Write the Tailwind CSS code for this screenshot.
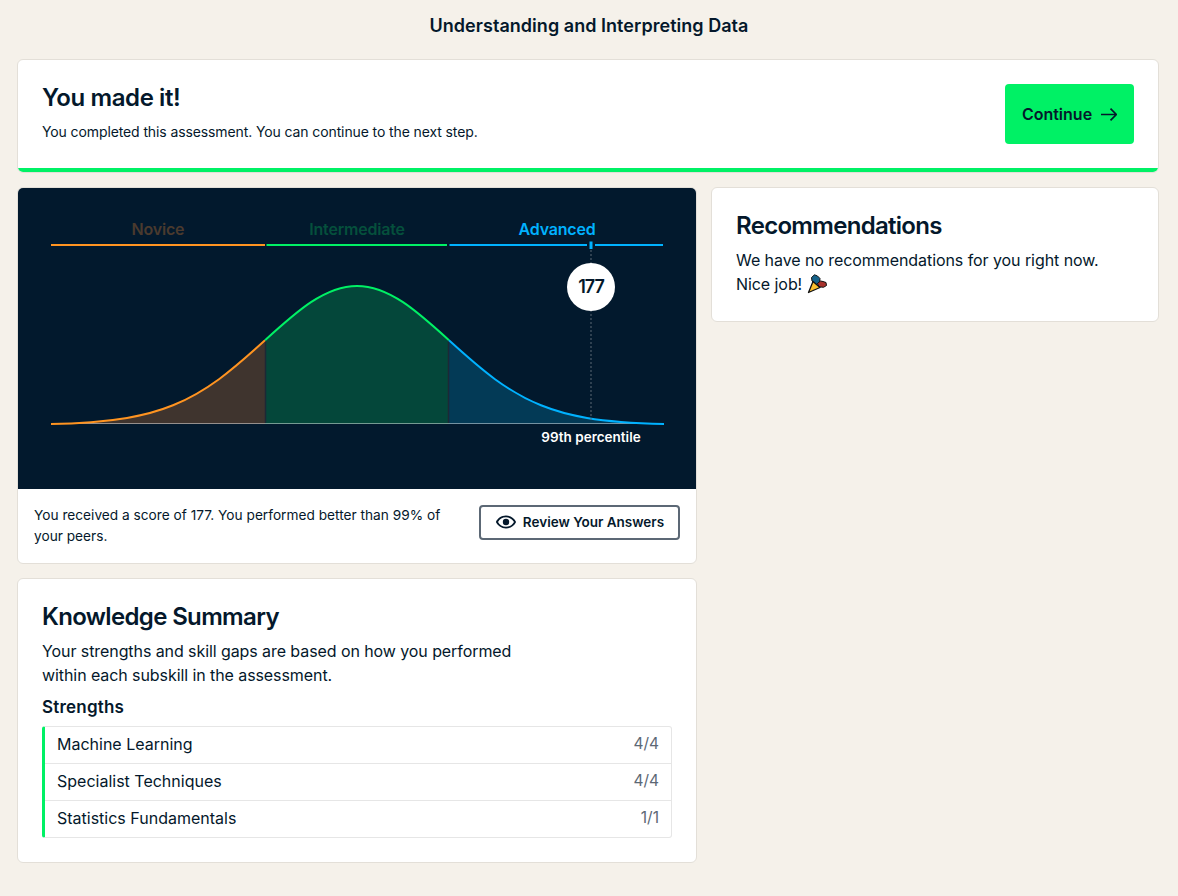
<!DOCTYPE html>
<html lang="en">
<head>
<meta charset="utf-8">
<title>Understanding and Interpreting Data</title>
<script src="https://cdn.jsdelivr.net/npm/@tailwindcss/browser@4"></script>
</head>
<body class="bg-[#f5f1ea] text-[#04182b] font-['Inter','Liberation_Sans',sans-serif] h-[896px] overflow-hidden">
  <header class="h-[59px] pb-[9px] flex items-center justify-center">
    <h1 class="text-[18px] font-semibold tracking-[0.04px]">Understanding and Interpreting Data</h1>
  </header>

  <main class="pl-[17px] pr-[19px] flex flex-col gap-[14px]">
    <!-- completed banner -->
    <section class="h-[114px] bg-white border border-[#e3dfd8] rounded-md overflow-hidden flex flex-col">
      <div class="flex-1 pl-[24px] pr-[24px] flex items-center justify-between">
        <div class="-mt-[4px]">
          <h2 class="text-[24px] leading-[30px] font-semibold tracking-[-0.4px]">You made it!</h2>
          <p class="mt-[9px] text-[14px] leading-[20px] tracking-[-0.11px]">You completed this assessment. You can continue to the next step.</p>
        </div>
        <button class="w-[129px] h-[60px] bg-[#00f165] rounded-[4px] flex items-center justify-center gap-[9px] text-[16px] font-semibold">
          Continue
          <svg class="w-[16px] h-[13px]" viewBox="0 0 16 13" fill="none" stroke="#04182b" stroke-width="1.7"><path d="M0 6.500h15M9.500 .7l5.800 5.800-5.800 5.800"/></svg>
        </button>
      </div>
      <div class="h-[4px] bg-[#00f165]"></div>
    </section>

    <div class="grid grid-cols-[680px_448px] gap-[14px] items-start">
      <div class="flex flex-col gap-[14px]">
        <!-- score chart -->
        <section class="h-[377px] bg-white border border-[#e3dfd8] rounded-md overflow-hidden">
          <svg class="block w-[678px] h-[301px] bg-[#02192d]" viewBox="18 188 678 301" fill="none">
            <g font-family="Inter, sans-serif" font-size="16" font-weight="600" letter-spacing="-0.2" text-anchor="middle">
              <text x="158" y="235" fill="#4a3a2e">Novice</text>
              <text x="357" y="235" fill="#05503c">Intermediate</text>
              <text x="557" y="235" fill="#00b2ff">Advanced</text>
            </g>
            <path d="M51 245H265" stroke="#ff9421" stroke-width="2"/>
            <path d="M266.500 245H447" stroke="#00f165" stroke-width="2"/>
            <path d="M449.500 245H587M595 245H663" stroke="#00b2ff" stroke-width="2"/>
            <path d="M591 241.500V249" stroke="#00b2ff" stroke-width="3"/>

            <path d="M51 424H265V340.300C249.670 354.240 234.330 368 219 379.200C203.670 390.400 188.330 399.080 173 405.300C157.670 411.520 142.330 415.380 127 417.900C101.670 422.070 76.330 423 51 423.500Z" fill="#3f342e"/>
            <path d="M265 424V340.300C280.330 326.360 295.670 312.340 311 302.200C326.330 292.060 341.670 286 357 286C372.330 286 387.670 292.060 403 302.200C418.330 312.340 433.670 326.360 449 340.300V424Z" fill="#04473a"/>
            <path d="M449 424V340.300C464.330 354.240 479.670 368 495 379.200C510.330 390.400 525.670 399.080 541 405.300C556.330 411.520 571.670 415.380 587 417.900C612.330 422.070 637.670 423 663 423.500V424Z" fill="#033a56"/>
            <path d="M51 423.500H663" stroke="#fff" stroke-opacity=".45"/>
            <path d="M265.500 340V423M448.500 340V423" stroke="#1c2836" stroke-width="1.500"/>

            <path d="M51 424C76.330 423.700 101.670 422.070 127 417.900C142.330 415.380 157.670 411.520 173 405.300C188.330 399.080 203.670 390.400 219 379.200C234.330 368 249.670 354.240 265 340.300" stroke="#ff9421" stroke-width="2"/>
            <path d="M265 340.300C280.330 326.360 295.670 312.340 311 302.200C326.330 292.060 341.670 286 357 286C372.330 286 387.670 292.060 403 302.200C418.330 312.340 433.670 326.360 449 340.300" stroke="#00f165" stroke-width="2"/>
            <path d="M449 340.300C464.330 354.240 479.670 368 495 379.200C510.330 390.400 525.670 399.080 541 405.300C556.330 411.520 571.670 415.380 587 417.900C612.330 422.070 637.670 423.300 664 424" stroke="#00b2ff" stroke-width="2"/>

            <path d="M591 250V421" stroke="#5b6875" stroke-dasharray="2 2"/>
            <circle cx="591" cy="287" r="24" fill="#fff"/>
            <text x="591" y="293" text-anchor="middle" font-family="Inter, sans-serif" font-size="18" font-weight="600" letter-spacing="-1" fill="#04182b">177</text>
            <text x="591" y="442" text-anchor="middle" font-family="Inter, sans-serif" font-size="13.500" font-weight="600" fill="#fff">99th percentile</text>
          </svg>
          <div class="h-[74px] pl-[16px] pr-[16px] flex items-center justify-between">
            <p class="w-[420px] text-[13.700px] leading-[21px]">You received a score of 177. You performed better than 99% of your peers.</p>
            <button class="w-[201px] h-[35px] mb-[8px] border-2 border-[#5c6875] rounded-[4px] flex items-center justify-center gap-[6px] text-[13.500px] font-semibold">
              <svg class="w-[22px] h-[22px]" viewBox="0 0 24 24" fill="#04182b"><path fill-rule="evenodd" d="M12 5C7 5 2.700 8.100 1 12c1.700 3.900 6 7 11 7s9.300-3.100 11-7c-1.700-3.900-6-7-11-7zm0 12.200c-3.800 0-7.100-2.100-8.700-5.200C4.900 8.900 8.200 6.800 12 6.800s7.100 2.100 8.700 5.200c-1.600 3.100-4.900 5.200-8.700 5.200z"/><circle cx="12" cy="12" r="3.500"/></svg>
              Review Your Answers
            </button>
          </div>
        </section>

        <!-- knowledge summary -->
        <section class="h-[285px] bg-white border border-[#e3dfd8] rounded-md pt-[23px] pl-[24px] pr-[24px]">
          <h2 class="text-[24px] leading-[30px] font-semibold tracking-[-0.65px]">Knowledge Summary</h2>
          <p class="mt-[7px] w-[480px] text-[16px] leading-[24px] tracking-[-0.08px]">Your strengths and skill gaps are based on how you performed within each subskill in the assessment.</p>
          <h3 class="mt-[8px] text-[17px] leading-[24px] font-semibold tracking-[0.2px]">Strengths</h3>
          <ul class="mt-[7px] border border-l-[3px] border-[#e6e6e6] border-l-[#00f165] rounded-[3px] text-[16px]">
            <li class="h-[36px] pl-[12px] pr-[12px] pb-[2px] flex items-center justify-between">Machine Learning <span class="text-[15.500px] text-[#5c6875]">4/4</span></li>
            <li class="h-[37px] pl-[12px] pr-[12px] pb-[2px] border-t border-t-[#e6e6e6] flex items-center justify-between">Specialist Techniques <span class="text-[15.500px] text-[#5c6875]">4/4</span></li>
            <li class="h-[37px] pl-[12px] pr-[12px] pb-[2px] border-t border-t-[#e6e6e6] flex items-center justify-between">Statistics Fundamentals <span class="text-[15.500px] text-[#5c6875]">1/1</span></li>
          </ul>
        </section>
      </div>

      <!-- recommendations -->
      <section class="h-[135px] bg-white border border-[#e3dfd8] rounded-md pt-[23px] pl-[24px] pr-[24px]">
        <h2 class="text-[24px] leading-[30px] font-semibold tracking-[-0.7px]">Recommendations</h2>
        <p class="mt-[7px] text-[16px] leading-[24px] tracking-[-0.07px]">We have no recommendations for you right now.<br>Nice job!
          <svg class="inline-block align-[-4px] w-[20px] h-[20px]" viewBox="0 0 20 20">
            <path d="M4.500 3.500 7.500 .8l3 1.200 2.500 2.500-.5 4-3.500 2.500L5 7z" fill="#16638a" stroke="#111" stroke-width="1"/>
            <path d="M10.500 9.500l3-2.500 2.500 .5 3 1 .5 3-3 1.800-4.500-.5z" fill="#a8322c" stroke="#111" stroke-width="1"/>
            <path d="M1.500 18.500 6 7.500l7 6z" fill="#fcc02e" stroke="#111" stroke-width="1.300" stroke-linejoin="round"/>
          </svg>
        </p>
      </section>
    </div>
  </main>
</body>
</html>
